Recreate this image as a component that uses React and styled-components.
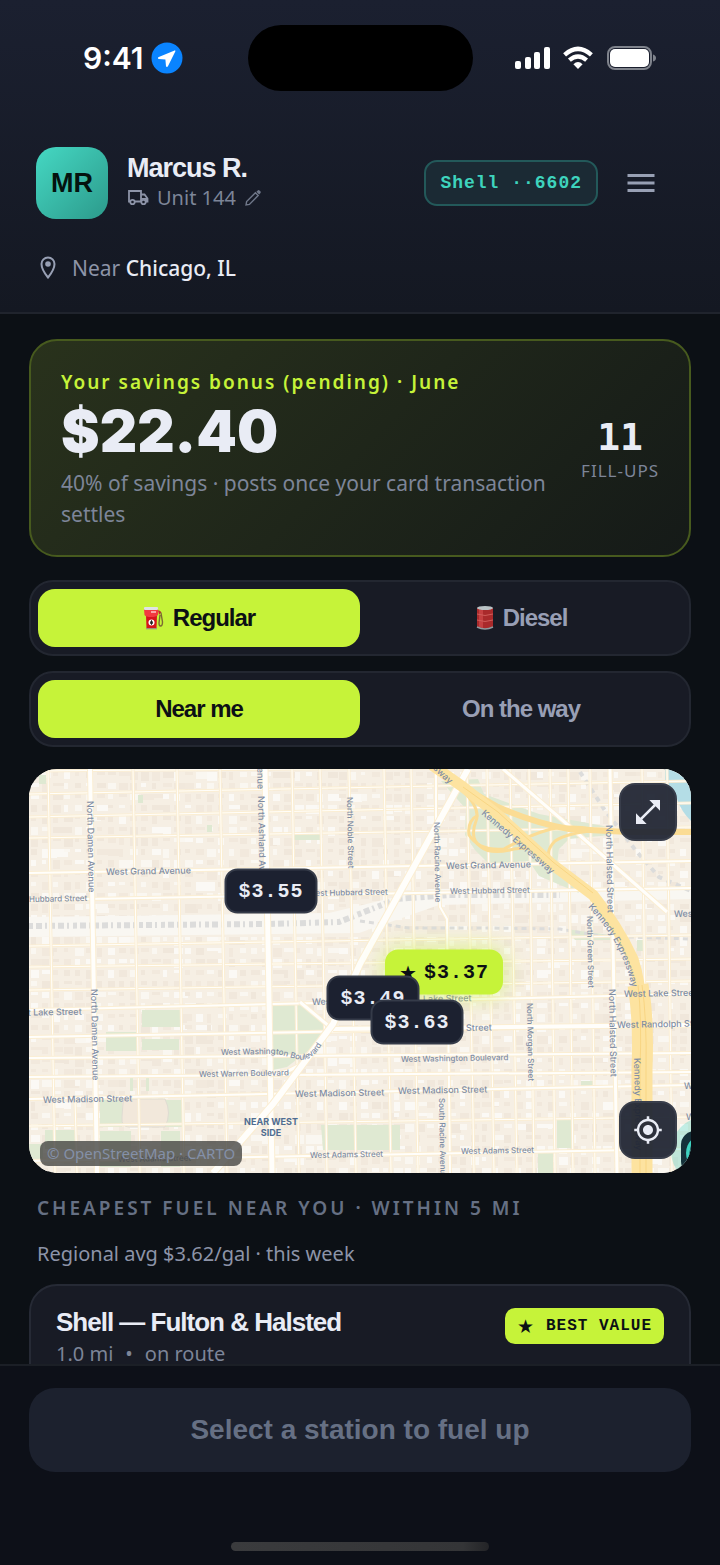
import { useState } from "react";
import styled, { createGlobalStyle } from "styled-components";
import { MdMenu, MdMyLocation, MdOpenInFull } from "react-icons/md";

const PINS = [
  { price: "$3.55", x: 242, y: 122 },
  { price: "$3.37", x: 415, y: 203, best: true },
  { price: "$3.49", x: 344, y: 229 },
  { price: "$3.63", x: 388, y: 253 },
];

function App() {
  const [fuel, setFuel] = useState("regular");
  const [scope, setScope] = useState("near");

  return (
    <Screen>
      <GlobalStyle />
      <Header>
        <StatusBar>
          <Clock>
            9:41
            <LocationArrow />
          </Clock>
          <Island />
          <StatusIcons />
        </StatusBar>
        <Profile>
          <Avatar>MR</Avatar>
          <Driver>
            <DriverName>Marcus R.</DriverName>
            <UnitButton type="button">
              <TruckIcon />
              Unit 144
              <PencilIcon />
            </UnitButton>
          </Driver>
          <CardChip type="button">Shell ··6602</CardChip>
          <MenuButton type="button" aria-label="Menu">
            <MdMenu size={36} />
          </MenuButton>
        </Profile>
        <Place>
          <PlaceIcon />
          <span>
            Near <strong>Chicago, IL</strong>
          </span>
        </Place>
      </Header>

      <Main>
        <Savings>
          <div>
            <SavingsLabel>Your savings bonus (pending) · June</SavingsLabel>
            <Amount>$22.40</Amount>
            <SavingsNote>
              40% of savings · posts once your card transaction settles
            </SavingsNote>
          </div>
          <FillUps>
            <FillCount>11</FillCount>
            <FillLabel>FILL-UPS</FillLabel>
          </FillUps>
        </Savings>

        <Segment>
          <Option
            type="button"
            $active={fuel === "regular"}
            onClick={() => setFuel("regular")}
          >
            <PumpIcon />
            Regular
          </Option>
          <Option
            type="button"
            $active={fuel === "diesel"}
            onClick={() => setFuel("diesel")}
          >
            <DrumIcon />
            Diesel
          </Option>
        </Segment>
        <Segment>
          <Option
            type="button"
            $active={scope === "near"}
            onClick={() => setScope("near")}
          >
            Near me
          </Option>
          <Option
            type="button"
            $active={scope === "route"}
            onClick={() => setScope("route")}
          >
            On the way
          </Option>
        </Segment>

        <MapBox>
          <StreetMap />
          <Attribution>© OpenStreetMap · CARTO</Attribution>
          {PINS.map((pin) => (
            <Pin
              key={pin.price}
              type="button"
              $best={pin.best}
              style={{
                left: `${(pin.x / 662) * 100}%`,
                top: `${(pin.y / 404) * 100}%`,
              }}
            >
              {pin.best && <Star $size={20}>★</Star>}
              {pin.price}
            </Pin>
          ))}
          <MapControls>
            <MapButton type="button" aria-label="Expand map">
              <MdOpenInFull size={32} />
            </MapButton>
            <MapButton type="button" aria-label="My location">
              <MdMyLocation size={30} />
            </MapButton>
          </MapControls>
        </MapBox>

        <SectionTitle>CHEAPEST FUEL NEAR YOU · WITHIN 5 MI</SectionTitle>
        <Average>Regional avg $3.62/gal · this week</Average>

        <Station>
          <div>
            <StationName>Shell — Fulton &amp; Halsted</StationName>
            <StationInfo>
              <span>1.0 mi</span>
              <span>•</span>
              <span>on route</span>
            </StationInfo>
          </div>
          <Badge>
            <Star $size={19}>★</Star>
            BEST VALUE
          </Badge>
        </Station>
      </Main>

      <Footer>
        <SelectButton type="button" disabled>
          Select a station to fuel up
        </SelectButton>
        <HomeBar />
      </Footer>
    </Screen>
  );
}

export default App;

function LocationArrow() {
  return (
    <svg width="32" height="32" viewBox="0 0 32 32">
      <circle cx="16" cy="16" r="15.5" fill="#0a84ff" />
      <path
        d="M23.6 8.4 L7.2 15.2 Q6.4 16.6 7.8 17 L14.4 17.6 L15 24.2 Q15.6 25.6 16.8 24.6 L24.4 9.2 Q24.4 8.2 23.6 8.4Z"
        fill="#fff"
      />
    </svg>
  );
}

function StatusIcons() {
  return (
    <svg width="142" height="28" viewBox="0 0 142 28">
      <g fill="#fff">
        <rect x="0" y="17" width="6" height="8" rx="2" />
        <rect x="10" y="13" width="6" height="12" rx="2" />
        <rect x="19" y="8" width="6" height="17" rx="2" />
        <rect x="29" y="3" width="6" height="22" rx="2" />
        <path d="M63 25 L58.4 20.2 Q63 16 67.6 20.2Z" />
      </g>
      <g fill="none" stroke="#fff" strokeWidth="4.4">
        <path d="M49.6 10.8 Q63 -1 76.4 10.8" />
        <path d="M54.4 16.2 Q63 8.800 71.6 16.2" />
      </g>
      <rect
        x="93"
        y="3"
        width="43"
        height="22"
        rx="7"
        fill="none"
        stroke="#7f838c"
        strokeWidth="2"
      />
      <rect x="95" y="5" width="39" height="18" rx="5" fill="#fff" />
      <path d="M138 10.5 q3 1 3 3.5 q0 2.5 -3 3.5Z" fill="#7f838c" />
    </svg>
  );
}

function TruckIcon() {
  return (
    <svg width="22" height="18" viewBox="0 0 22 18">
      <g fill="none" stroke="#8d94a8" strokeWidth="1.8">
        <path d="M3 12.500H2V2H14V12.500H8" />
        <path d="M14 5.500H17.500L20.500 9.500V12.500H19" />
        <circle cx="5.500" cy="13" r="2.200" />
        <circle cx="16.500" cy="13" r="2.200" />
      </g>
      <path d="M14 9H20.500V12.500H19A2.600 2.600 0 0 0 14 12.500Z" fill="#8d94a8" />
    </svg>
  );
}

function PencilIcon() {
  return (
    <svg width="18" height="18" viewBox="0 0 18 18">
      <path
        d="M2 16L2.600 12.600 11.400 3.800 14.200 6.600 5.400 15.400Z"
        fill="none"
        stroke="#70788a"
        strokeWidth="1.400"
      />
      <path d="M12.400 2.800L14 1.200Q14.800 0.800 15.500 1.500L16.600 2.600Q17 3.300 16.500 4L15.200 5.600Z" fill="#70788a" />
    </svg>
  );
}

function PlaceIcon() {
  return (
    <svg width="24" height="26" viewBox="0 0 24 26">
      <path
        d="M12 22.500Q5.500 14.500 5.500 9A6.500 6.500 0 0 1 18.500 9Q18.500 14.500 12 22.500Z"
        fill="none"
        stroke="#98a0b4"
        strokeWidth="2"
      />
      <circle cx="12" cy="9" r="2.800" fill="#98a0b4" />
    </svg>
  );
}

function PumpIcon() {
  return (
    <svg width="22" height="24" viewBox="0 0 22 24">
      <path d="M3 9 H14 L13.500 22.500 H3.500Z" fill="#d5141c" />
      <path d="M1 3 H15 V9 Q13 11 8 11 Q3 11 1.500 9Z" fill="#f23a40" />
      <rect x="1" y="1" width="14" height="3" rx="1" fill="#dfe3e4" />
      <path d="M8 6 H13" stroke="#ffc9c4" strokeWidth="1.500" />
      <circle cx="8.500" cy="16.500" r="3" fill="#fff" />
      <path d="M8.500 14.500 q2 2.500 0 4 q-2 -1.500 0 -4" fill="#222" stroke="#222" />
      <path
        d="M16 5 L18 7 L19.500 16 Q19.500 20 17.500 20 Q16 20 16 17 L17 9"
        fill="none"
        stroke="#7c6a34"
        strokeWidth="1.400"
      />
      <path d="M15 4 L18 6 L16 9Z" fill="#cf232a" />
      <path d="M3 22.800 H14" stroke="#8c979a" />
    </svg>
  );
}

function DrumIcon() {
  return (
    <svg width="20" height="26" viewBox="0 0 20 26">
      <path d="M2 3 V22 Q10 26 18 22 V3Z" fill="#a92a2b" />
      <path d="M4 5 V22 L8 23 V5Z" fill="#c44041" />
      <ellipse cx="10" cy="3" rx="8" ry="2" fill="#b9c2c5" />
      <g fill="none" stroke="#cf5c59">
        <path d="M2 9 Q10 12 18 9" />
        <path d="M2 15 Q10 18 18 15" />
      </g>
      <path
        d="M2 22 Q10 26 18 22"
        fill="none"
        stroke="#8e9a9e"
        strokeWidth="1.500"
      />
    </svg>
  );
}

// x at the top edge of the map; the whole grid leans 7px to the right
const AVENUES = [19, 104, 148, 191, 263, 291, 320, 355, 382, 438, 458, 481];
const AVENUES_EAST = [500, 521, 539, 561, 613, 638];
const MAIN_AVENUES = [
  { x: 61, width: 4 },
  { x: 236, width: 5 },
  { x: 581, width: 3 },
];

// y at the left and at the right edge
const STREETS = [
  [2, -3],
  [25, 12],
  [48, 34],
  [69, 58],
  [177, 166],
  [198, 190],
  [221, 212],
  [357, 348],
];
const MAIN_STREETS = [
  [104, 92],
  [131, 119],
  [241, 225],
  [268, 256],
  [289, 284],
  [308, 303],
  [330, 316],
  [392, 380],
];

const LABELS = [
  { text: "West Grand Avenue", x: 77, y: 106 },
  { text: "West Grand Avenue", x: 417, y: 100 },
  { text: "Hubbard Street", x: 0, y: 133, size: 8 },
  { text: "West Hubbard Street", x: 279, y: 127, size: 8 },
  { text: "West Hubbard Street", x: 421, y: 125, size: 8 },
  { text: "West Lake Street", x: -20, y: 247 },
  { text: "West", x: 283, y: 236 },
  { text: "Lake Street", x: 394, y: 233 },
  { text: "Street", x: 437, y: 262 },
  { text: "West Lake Street", x: 595, y: 228 },
  { text: "West Randolph Street", x: 588, y: 259 },
  { text: "West Washington Boulevard", x: 372, y: 293, size: 8 },
  { text: "West Warren Boulevard", x: 170, y: 308, size: 8 },
  { text: "West Madison Street", x: 14, y: 334 },
  { text: "West Madison Street", x: 266, y: 328 },
  { text: "West Madison Street", x: 369, y: 325 },
  { text: "West Adams Street", x: 89, y: 393, size: 8 },
  { text: "West Adams Street", x: 281, y: 389, size: 8 },
  { text: "West Adams Street", x: 432, y: 385, size: 8 },
  { text: "West", x: 645, y: 148 },
  { text: "West", x: 655, y: 320 },
  { text: "West", x: 657, y: 351 },
];

const AVENUE_LABELS = [
  { text: "North Damen Avenue", x: 58, y: 32 },
  { text: "North Damen Avenue", x: 62, y: 220 },
  { text: "Avenue", x: 228, y: -12 },
  { text: "North Ashland Avenue", x: 229, y: 27 },
  { text: "North Noble Street", x: 318, y: 28, size: 8 },
  { text: "North Racine Avenue", x: 405, y: 53, size: 8 },
  { text: "North Halsted Street", x: 577, y: 56 },
  { text: "North Halsted Street", x: 580, y: 220 },
  { text: "North Green Street", x: 558, y: 147, size: 8 },
  { text: "North Morgan Street", x: 498, y: 234, size: 8 },
  { text: "South Racine Avenue", x: 410, y: 329, size: 8 },
  { text: "Kennedy Expressway", x: 605, y: 289 },
];

const PARKS = [
  "M244 235H274L299 258 284 278 258 298 244 301Z",
  "M77 263H108V282H77Z",
  "M113 241H151V258H113Z",
  "M113 270H150V281H113Z",
  "M292 356H371V381H294Z",
  "M71 331H93V358H71Z",
  "M137 331H153V358H137Z",
  "M71 362H102V398H71Z",
  "M132 362H151V398H132Z",
  "M101 308H104V322H101Z",
  "M117 308H120V322H117Z",
  "M0 375H14V392H0Z",
  "M16 361H46V380H16Z",
  "M528 350H545V379H528Z",
  "M509 383H524V404H509Z",
  "M265 65H291V71H265Z",
  "M10 6H17V15H10Z",
  "M109 26H114V34H109Z",
  "M178 56H183V63H178Z",
  "M608 171H616V182H608Z",
  "M537 160L581 166V171H546Z",
  "M552 312H564V317H552Z",
];

// small building footprints scattered over the blocks
function makeBuildings() {
  const shades = ["#f1e8dc", "#f0e7db", "#faf7f1", "#f2e9dd", "#fbf9f5"];
  const buildings = [];
  let seed = 11;
  const next = () => {
    seed = (seed * 16807) % 2147483647;
    return seed / 2147483647;
  };
  for (let y = 3; y < 404; y += 11) {
    for (let x = 2; x < 662; x += 11) {
      const wide = next() > 0.8;
      buildings.push({
        x,
        y,
        width: Math.round(4 + next() * (wide ? 13 : 5)),
        height: Math.round(3 + next() * 6),
        fill: shades[Math.floor(next() * shades.length)],
      });
    }
  }
  return buildings;
}

const BUILDINGS = makeBuildings();

function Road({ d, width }) {
  return (
    <g fill="none">
      <path d={d} stroke="#fbeed3" strokeWidth={width + 2} />
      <path d={d} stroke="#fffefb" strokeWidth={width} />
    </g>
  );
}

function StreetMap() {
  return (
    <MapSvg viewBox="0 0 662 404" preserveAspectRatio="xMidYMid slice">
      <rect width="662" height="404" fill="#f6efe4" />
      {BUILDINGS.map((b, i) => (
        <rect key={i} {...b} />
      ))}
      <path d="M0 148L300 144 400 120 662 118V130L410 136 330 164 0 168Z" fill="#f9f7f2" />
      <path
        d="M412 12L449 10 455 25 510 45 580 58 582 66 540 70 530 80 528 96 538 108 550 124 510 107 500 92 460 95 446 81 436 66 437 40Z"
        fill="#dfe9d2"
      />
      {PARKS.map((d) => (
        <path key={d} d={d} fill="#dfe9d2" />
      ))}
      <path
        d="M94 334Q94 330 98 330H136Q143 344 136 358H100Q92 358 93 348Z"
        fill="#f2e8db"
        stroke="#dfdcd2"
      />
      <path d="M636 0H662V52Q652 42 648 30 640 22 636 14Z" fill="#b4dde6" />

      <g fill="none" stroke="#dcdcdb">
        <path
          d="M0 157L241 155 310 153 368 130 420 126 531 126"
          strokeWidth="6"
          strokeDasharray="4 3 6 3 2 4"
        />
        <path
          d="M331 152L380 159 458 159 531 160 571 167 662 170"
          strokeWidth="3"
          strokeDasharray="5 4"
        />
        <path
          d="M551 3L575 40 608 83 630 108 662 122"
          strokeWidth="4"
          strokeDasharray="5 5"
        />
      </g>

      {STREETS.map(([from, to]) => (
        <Road key={from} d={`M0 ${from}L662 ${to}`} width={1} />
      ))}
      {AVENUES.map((x) => (
        <Road key={x} d={`M${x} 0L${x + 7} 404`} width={1} />
      ))}
      {AVENUES_EAST.map((x) => (
        <Road key={x} d={`M${x} 0L${x + 5} 404`} width={1} />
      ))}
      <Road d="M46 330L48 404" width={1} />
      <Road d="M407 0V52L411 138 418 150 421 404" width={2} />
      {MAIN_STREETS.map(([from, to]) => (
        <Road key={from} d={`M0 ${from}L662 ${to}`} width={2} />
      ))}
      {MAIN_AVENUES.map(({ x, width }) => (
        <Road key={x} d={`M${x} 0L${x + 7} 404`} width={width} />
      ))}
      <Road d="M304 260L662 256" width={4} />
      <Road d="M271 233L301 258" width={3} />
      <Road d="M241 306Q262 304 278 291" width={3} />
      <Road d="M474 0L539 56 638 143" width={3} />
      <Road d="M439 0L331 195 304 255 244 335 184 404" width={6} />

      <g fill="none" stroke="#fbdc94">
        <path
          d="M434 22Q452 40 447 52 440 70 452 78 462 86 485 80 510 76 524 94"
          strokeWidth="3"
        />
        <path
          d="M449 46Q438 52 440 66 450 82 475 80 500 66 522 60 540 56 564 60"
          strokeWidth="3"
        />
        <path d="M524 94Q514 84 526 72 538 64 564 62" strokeWidth="3" />
        <path d="M434 18L469 38Q505 54 540 60L600 63H662" strokeWidth="6" />
      </g>
      <g fill="none" stroke="#fde3a0">
        <path
          d="M403 -4L434 18 469 46 524 96 564 126Q588 156 604 190 612 214 613 250"
          strokeWidth="11"
        />
        <path d="M609 216Q615 250 613 300V404" strokeWidth="21" />
      </g>
      <g fill="none" stroke="#f8d583">
        <path d="M434 18L469 43 524 93 564 124" />
        <path d="M609 216Q613 250 611 300V404" />
        <path d="M613 216Q618 250 617 300V404" />
      </g>

      <path id="kennedy-top" d="M382 -20L404 0 434 28" fill="none" />
      <path id="kennedy-mid" d="M452 45L485 73 532 114" fill="none" />
      <path
        id="kennedy-low"
        d="M559 138Q582 162 592 186 602 208 604 226"
        fill="none"
      />
      <path
        id="washington"
        d="M192 286L244 285C262 286 270 295 282 288 289 283 293 276 298 266"
        fill="none"
      />

      <MapText>
        {LABELS.map(({ text, x, y, size = 9 }) => (
          <text
            key={`${text}${x}`}
            fontSize={size}
            transform={`translate(${x} ${y}) rotate(-1)`}
          >
            {text}
          </text>
        ))}
        {AVENUE_LABELS.map(({ text, x, y, size = 9 }) => (
          <text
            key={`${text}${y}`}
            fontSize={size}
            transform={`translate(${x} ${y}) rotate(89)`}
          >
            {text}
          </text>
        ))}
        <text fontSize="9">
          <textPath href="#kennedy-top">Expressway</textPath>
        </text>
        <text fontSize="9">
          <textPath href="#kennedy-mid">Kennedy Expressway</textPath>
        </text>
        <text fontSize="9">
          <textPath href="#kennedy-low">Kennedy Expressway</textPath>
        </text>
        <text fontSize="8">
          <textPath href="#washington">West Washington Boulevard</textPath>
        </text>
      </MapText>
      <DistrictText x="242" y="356">
        NEAR WEST
        <tspan x="242" y="367">
          SIDE
        </tspan>
      </DistrictText>

      <circle cx="676" cy="382" r="34" fill="#3fd0bd" fillOpacity="0.3" />
      <rect x="652" y="362" width="44" height="44" rx="14" fill="#15313a" />
      <circle cx="676" cy="384" r="19" fill="#3ed3c0" />
      <circle
        cx="676"
        cy="384"
        r="14"
        fill="none"
        stroke="#15313a"
        strokeWidth="3"
      />
    </MapSvg>
  );
}

const GlobalStyle = createGlobalStyle`
  * {
    box-sizing: border-box;
  }
  body {
    margin: 0;
    background-color: #0c1015;
    font-family: "Noto Sans", sans-serif;
    color: #e9ecf5;
  }
  button {
    border: none;
    background: none;
    padding: 0;
    margin: 0;
    color: inherit;
    font: inherit;
    cursor: pointer;
  }
  h1, h2, p {
    margin: 0;
  }
  svg {
    display: block;
    flex-shrink: 0;
  }
`;

const Screen = styled.div`
  display: flex;
  flex-direction: column;
  height: 100vh;
`;

const Header = styled.header`
  flex-shrink: 0;
  background: linear-gradient(180deg, #1b2030 0%, #141822 100%);
  border-bottom: 2px solid #20242d;
`;

const StatusBar = styled.div`
  display: grid;
  grid-template-columns: 1fr auto 1fr;
  align-items: center;
  padding-top: 25px;
`;

const Clock = styled.div`
  display: flex;
  align-items: center;
  gap: 8px;
  padding-left: 83px;
  font-family: Inter, sans-serif;
  font-size: 30px;
  font-weight: 600;
  color: #ffffff;
  & ~ svg {
    justify-self: end;
    margin-right: 63px;
  }
`;

const Island = styled.div`
  width: 225px;
  height: 66px;
  border-radius: 33px;
  background-color: #000000;
`;

const Profile = styled.div`
  display: flex;
  align-items: center;
  padding: 56px 61px 0 36px;
`;

const Avatar = styled.div`
  display: flex;
  align-items: center;
  justify-content: center;
  width: 72px;
  height: 72px;
  border-radius: 20px;
  background: linear-gradient(135deg, #45d8c3 0%, #2c9a8b 100%);
  font-family: "Liberation Sans", sans-serif;
  font-size: 27px;
  font-weight: 700;
  color: #04130f;
`;

const Driver = styled.div`
  flex: 1;
  margin-left: 19px;
  padding-bottom: 2px;
`;

const DriverName = styled.h1`
  font-family: "Liberation Sans", sans-serif;
  font-size: 27px;
  font-weight: 700;
  line-height: 32px;
  letter-spacing: -1px;
`;

const UnitButton = styled.button`
  display: flex;
  align-items: center;
  gap: 8px;
  font-size: 20px;
  line-height: 28px;
  color: #7d8598;
`;

const CardChip = styled.button`
  height: 46px;
  padding: 0 14px;
  border: 2px solid #23595a;
  border-radius: 13px;
  background-color: #1b2a34;
  font-family: "Liberation Mono", monospace;
  font-size: 18px;
  font-weight: 700;
  letter-spacing: 1px;
  color: #3ed3bd;
`;

const MenuButton = styled.button`
  margin-left: 25px;
  color: #98a0b4;
`;

const Place = styled.div`
  display: flex;
  align-items: center;
  gap: 12px;
  padding: 34px 36px 29px;
  font-size: 21px;
  line-height: 30px;
  color: #8d94a8;
  strong {
    font-weight: 500;
    color: #e9ecf5;
  }
`;

const Main = styled.main`
  flex: 1;
  min-height: 0;
  overflow-y: auto;
  scrollbar-width: none;
  padding: 25px 29px 0;
`;

const Savings = styled.section`
  display: flex;
  align-items: center;
  justify-content: space-between;
  gap: 24px;
  padding: 29px 30px 25px;
  border: 2px solid #475a1e;
  border-radius: 28px;
  background: linear-gradient(135deg, #29321c 0%, #151a18 100%);
`;

const SavingsLabel = styled.p`
  font-size: 19px;
  font-weight: 600;
  line-height: 24px;
  letter-spacing: 2px;
  color: #c6f339;
`;

const Amount = styled.p`
  font-family: Inter, sans-serif;
  font-size: 58px;
  font-weight: 900;
  line-height: 74px;
`;

const SavingsNote = styled.p`
  font-size: 21px;
  line-height: 31px;
  color: #7d8598;
`;

const FillUps = styled.div`
  flex-shrink: 0;
  text-align: center;
`;

const FillCount = styled.p`
  font-family: "DejaVu Sans Mono", monospace;
  font-size: 38px;
  font-weight: 700;
  line-height: 42px;
`;

const FillLabel = styled.p`
  font-size: 17px;
  line-height: 26px;
  letter-spacing: 1px;
  color: #7d8598;
`;

const Segment = styled.div`
  display: grid;
  grid-template-columns: 1fr 1fr;
  margin-top: 23px;
  padding: 7px;
  border: 2px solid #232731;
  border-radius: 24px;
  background-color: #181b25;
  & + & {
    margin-top: 15px;
  }
`;

const Option = styled.button`
  display: flex;
  align-items: center;
  justify-content: center;
  gap: 8px;
  height: 58px;
  border-radius: 17px;
  background-color: ${({ $active }) => ($active ? "#c6f339" : "transparent")};
  font-family: "Liberation Sans", sans-serif;
  font-size: 24px;
  font-weight: 700;
  letter-spacing: -1px;
  color: ${({ $active }) => ($active ? "#0c1015" : "#989fb5")};
`;

const MapBox = styled.section`
  position: relative;
  height: 404px;
  margin-top: 22px;
  border-radius: 28px;
  overflow: hidden;
`;

const MapSvg = styled.svg`
  width: 100%;
  height: 100%;
`;

const MapText = styled.g`
  font-family: Inter, sans-serif;
  font-weight: 500;
  fill: #7f8da4;
`;

const DistrictText = styled.text`
  font-family: Inter, sans-serif;
  font-size: 9px;
  font-weight: 700;
  text-anchor: middle;
  fill: #4f6d92;
`;

const Attribution = styled.span`
  position: absolute;
  left: 11px;
  bottom: 7px;
  padding: 0 7px;
  border-radius: 8px;
  background-color: rgba(70, 70, 68, 0.8);
  font-size: 15px;
  line-height: 25px;
  color: #8490a8;
`;

const Pin = styled.button`
  position: absolute;
  display: flex;
  align-items: center;
  gap: 6px;
  height: 45px;
  padding: 0 12px;
  transform: translate(-50%, -50%);
  border: 2px solid ${({ $best }) => ($best ? "#c6f339" : "#353b49")};
  border-radius: 13px;
  background-color: ${({ $best }) => ($best ? "#c6f339" : "#1c2130")};
  box-shadow: ${({ $best }) => ($best ? "0 0 24px #c6f33999" : "none")};
  font-family: "Liberation Mono", monospace;
  font-size: 20px;
  font-weight: 700;
  letter-spacing: 1px;
  color: ${({ $best }) => ($best ? "#0c1015" : "#e9ecf5")};
`;

const Star = styled.span`
  font-family: "DejaVu Sans", sans-serif;
  font-size: ${({ $size }) => $size}px;
  line-height: 1;
`;

const MapControls = styled.div`
  position: absolute;
  top: 14px;
  right: 14px;
  bottom: 14px;
  display: flex;
  flex-direction: column;
  justify-content: space-between;
`;

const MapButton = styled.button`
  display: flex;
  align-items: center;
  justify-content: center;
  width: 58px;
  height: 58px;
  border: 2px solid #393e4b;
  border-radius: 16px;
  background-color: rgba(32, 37, 51, 0.94);
  color: #e9ecf5;
`;

const SectionTitle = styled.h2`
  margin: 22px 8px 0;
  font-size: 19px;
  font-weight: 600;
  line-height: 26px;
  letter-spacing: 3px;
  color: #667084;
`;

const Average = styled.p`
  margin: 19px 8px 16px;
  font-size: 20px;
  line-height: 28px;
  color: #8d94a8;
`;

const Station = styled.article`
  display: flex;
  align-items: flex-start;
  justify-content: space-between;
  padding: 19px 25px 120px;
  border: 2px solid #262a35;
  border-radius: 28px;
  background-color: #181b25;
`;

const StationName = styled.h2`
  font-family: "Liberation Sans", sans-serif;
  font-size: 26px;
  font-weight: 700;
  line-height: 34px;
  letter-spacing: -1px;
`;

const StationInfo = styled.p`
  display: flex;
  gap: 12px;
  font-size: 20px;
  line-height: 30px;
  color: #7d8598;
`;

const Badge = styled.span`
  display: flex;
  align-items: center;
  gap: 11px;
  height: 36px;
  margin-top: 3px;
  padding: 0 12px;
  border-radius: 10px;
  background-color: #c6f339;
  font-family: "Liberation Mono", monospace;
  font-size: 16px;
  font-weight: 700;
  letter-spacing: 1px;
  color: #0c1015;
`;

const Footer = styled.footer`
  display: flex;
  flex-direction: column;
  align-items: center;
  flex-shrink: 0;
  padding: 22px 29px 14px;
  border-top: 2px solid #1b1f26;
  background-color: #0d1018;
`;

const SelectButton = styled.button`
  width: 100%;
  height: 84px;
  border-radius: 26px;
  background-color: #1c212e;
  font-family: "Liberation Sans", sans-serif;
  font-size: 28px;
  font-weight: 700;
  color: #667084;
`;

const HomeBar = styled.div`
  width: 258px;
  height: 9px;
  margin-top: 70px;
  border-radius: 5px;
  background: linear-gradient(90deg, #3a3b3d 0%, #343537 90%, #232427 100%);
`;
